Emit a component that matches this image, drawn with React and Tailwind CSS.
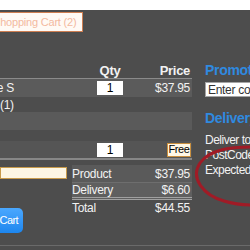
export default function App() {
  return (
    <div className="relative w-[250px] h-[250px] overflow-hidden bg-[#4d4d4d] text-[#f2f2f2] font-['Liberation_Sans',Arial,sans-serif] text-[12px] tracking-[-0.3px] leading-none">
      <div className="h-[10px] bg-white" />
      <div className="h-[22px] pt-[2px]">
        <div className="-ml-[12px] inline-flex h-[20px] items-center border border-[#cf7f52] bg-[#fffaf5] pl-[4px] pr-[6px] text-[11px] tracking-[-0.2px] text-[#f3b9a0] whitespace-nowrap">
          Shopping Cart (2)
        </div>
      </div>
      <div className="flex">
        <div className="w-[192px] shrink-0 pt-[28px]">
          <div className="flex h-[19px] items-end border-b border-[#8a8a8a] pb-[1px] text-[13px] font-bold">
            <div className="w-[95px]" />
            <div className="w-[30px] text-center">Qty</div>
            <div className="flex-1 pr-[2px] text-right">Price</div>
          </div>
          <div className="flex h-[18px] items-center bg-[#5b5b5b]">
            <div className="w-[95px] whitespace-nowrap">
              <span className="-ml-[19px]">Size S</span>
            </div>
            <div className="flex w-[30px] justify-start pl-[2px]">
              <div className="flex h-[14px] w-[26px] items-center justify-center bg-white text-[12px] text-black">1</div>
            </div>
            <div className="flex-1 pr-[2px] text-right">$37.95</div>
          </div>
          <div className="flex h-[15px] items-center">
            <div className="w-[95px] whitespace-nowrap">(1)</div>
          </div>
          <div className="h-[18px] bg-[#5a5a5a]" />
          <div className="h-[11px]" />
          <div className="flex h-[17px] items-center bg-[#555555]">
            <div className="w-[95px]" />
            <div className="flex w-[30px] justify-start pl-[2px]">
              <div className="flex h-[14px] w-[26px] items-center justify-center bg-white text-[12px] text-black">1</div>
            </div>
            <div className="flex flex-1 justify-end pr-[1px]">
              <div className="flex h-[14px] w-[24px] items-center justify-center border border-[#c99040] bg-[#fff8e6] text-[11px] tracking-[-0.4px] text-black">Free</div>
            </div>
          </div>
          <div className="h-[2px] bg-[#878787]" />
          <div className="flex pt-[5px]">
            <div className="w-[72px] shrink-0">
              <div className="mt-[2px] h-[12px] w-[67px] border border-[#c79a4a] bg-[#fdf6e3]" />
              <div className="mt-[29px] w-[23px]">
                <div className="-ml-[45px] flex h-[25px] w-[68px] items-center justify-end rounded-[5px] bg-gradient-to-b from-[#4aa8ff] to-[#1c86ee] pr-[5px] text-[11px] tracking-[-0.6px] text-white whitespace-nowrap">
                  Add to Cart
                </div>
              </div>
            </div>
            <div className="flex-1">
              <div className="flex h-[18px] items-center justify-between border-b border-[#6e6e6e] bg-[#5a5a5a] pr-[2px]">
                <span>Product</span>
                <span>$37.95</span>
              </div>
              <div className="flex h-[17px] items-center justify-between border-b-[3px] border-double border-[#a0a0a0] bg-[#5f5f5f] pr-[2px]">
                <span>Delivery</span>
                <span>$6.60</span>
              </div>
              <div className="flex h-[16px] items-center justify-between pr-[2px]">
                <span>Total</span>
                <span>$44.55</span>
              </div>
            </div>
          </div>
        </div>
        <div className="ml-[13px] flex-1 whitespace-nowrap pt-[31px]">
          <div className="h-[15px] text-[14px] font-bold leading-[15px] text-[#2f8ae0]">Promotional Code</div>
          <div className="mt-[4px] flex h-[15px] w-[70px] items-center border border-[#a5a5a5] bg-white pl-[2px] text-[12px] text-[#333333]">
            Enter code
          </div>
          <div className="mt-[14px] h-[15px] text-[14px] font-bold leading-[15px] text-[#2f8ae0]">Delivery Options</div>
          <div className="mt-[7px] leading-[15px] tracking-[-0.5px]">
            <div>Deliver to: UK</div>
            <div>PostCode: SW1</div>
            <div>Expected: 3 days</div>
          </div>
        </div>
      </div>
      <div className="absolute left-0 top-[245px] h-[1px] w-[250px] bg-[#6a6a6a]" />
      <svg className="pointer-events-none absolute left-0 top-0" width="250" height="250" viewBox="0 0 250 250">
        <path
          d="M 252 147 C 232 147 210 149 200 163 C 190 178 203 195 224 201 C 234 204 244 205 252 205"
          fill="none"
          stroke="#a01b26"
          strokeWidth="3"
        />
      </svg>
    </div>
  );
}
